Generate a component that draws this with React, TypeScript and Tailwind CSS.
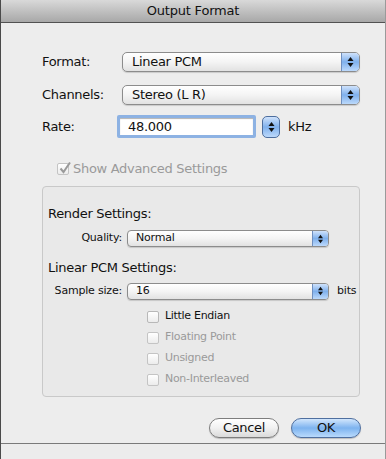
import React from "react";

const font = { fontFamily: '"DejaVu Sans", "Liberation Sans", sans-serif' };

function Arrows({ small }: { small?: boolean }) {
  return (
    <svg width="7" height={small ? 10 : 12} viewBox="0 0 7 12" aria-hidden="true">
      <path d="M3.5 1 L6.5 5 L0.5 5 Z" fill="#111" />
      <path d="M3.5 11 L6.5 7 L0.5 7 Z" fill="#111" />
    </svg>
  );
}

function Popup({ value, small }: { value: string; small?: boolean }) {
  return (
    <div
      className={`flex items-stretch overflow-hidden border border-[#8c8c8c] bg-gradient-to-b from-white via-[#f4f4f4] to-[#e2e2e2] shadow-[0_1px_1px_rgba(0,0,0,0.15)] ${
        small ? "h-[17px] w-[202px] rounded-[4px]" : "h-[20px] flex-1 rounded-[5px]"
      }`}
    >
      <div
        className={`flex flex-1 items-center text-[#111] ${
          small ? "pl-[8px] text-[11px] tracking-[-0.2px]" : "pl-[9px] text-[13px] tracking-[-0.3px]"
        }`}
      >
        {value}
      </div>
      <div
        className={`flex items-center justify-center border-l border-[#6f8fbf] bg-gradient-to-b from-[#cfe2fb] via-[#7fb0ec] to-[#bcd9fb] ${
          small ? "w-[16px]" : "w-[18px]"
        }`}
      >
        <Arrows small={small} />
      </div>
    </div>
  );
}

function Check({ checked, dim }: { checked?: boolean; dim?: boolean }) {
  return (
    <div
      className={`relative flex h-[12px] w-[12px] shrink-0 items-center justify-center rounded-[2px] border bg-gradient-to-b from-white to-[#ececec] ${
        dim ? "border-[#c4c4c4]" : "border-[#b8b8b8]"
      }`}
    >
      {checked ? (
        <svg
          width="14"
          height="14"
          viewBox="0 0 14 14"
          className="absolute -top-[3px] left-[0px]"
          aria-hidden="true"
        >
          <path d="M2.5 7.5 L5.5 11 L12 1.5" fill="none" stroke="#9a9a9a" strokeWidth="2" />
        </svg>
      ) : null}
    </div>
  );
}

export default function App() {
  return (
    <div
      className="flex h-[459px] w-[386px] flex-col overflow-hidden border-l border-r border-l-[#4a4a4a] border-r-[#9a9a9a] bg-[#ededed]"
      style={font}
    >
      <div className="flex h-[23px] shrink-0 items-center justify-center border-b border-[#525252] bg-gradient-to-b from-[#d9d9d9] to-[#a8a8a8] text-[13px] tracking-[-0.2px] text-[#111]">
        Output Format
      </div>

      <div className="flex flex-1 flex-col pl-[41px] pr-[25px] text-[13px] tracking-[-0.3px] text-[#111]">
        <div className="mt-[29px] flex items-center">
          <div className="w-[80px]">Format:</div>
          <Popup value="Linear PCM" />
        </div>
        <div className="mt-[13px] flex items-center">
          <div className="w-[80px]">Channels:</div>
          <Popup value="Stereo (L R)" />
        </div>
        <div className="mt-[10px] flex items-center">
          <div className="w-[75px]">Rate:</div>
          <div className="flex h-[23px] w-[139px] items-center rounded-[2px] border-[3px] border-[#8db2e3] bg-white pl-[8px] shadow-[inset_0_1px_1px_rgba(0,0,0,0.3)]">
            48.000
          </div>
          <div className="ml-[6px] flex h-[22px] w-[18px] flex-col items-center justify-center rounded-[5px] border border-[#4d6e9e] bg-gradient-to-b from-[#cfe2fb] via-[#7fb0ec] to-[#bcd9fb]">
            <Arrows />
          </div>
          <div className="ml-[8px]">kHz</div>
        </div>

        <div className="mt-[21px] flex items-center pl-[15px]">
          <Check checked dim />
          <span className="ml-[4px] text-[#9a9a9a]">Show Advanced Settings</span>
        </div>

        <div className="mt-[7px] flex h-[211px] flex-col rounded-[4px] border border-[#c9c9c9] bg-[#e9e9e9] pl-[5px]">
          <div className="mt-[17px]">Render Settings:</div>
          <div className="mt-[7px] flex items-center">
            <div className="w-[79px] pr-[5px] text-right text-[11px] tracking-[-0.2px]">Quality:</div>
            <Popup value="Normal" small />
          </div>
          <div className="mt-[11px]">Linear PCM Settings:</div>
          <div className="mt-[5px] flex items-center">
            <div className="w-[79px] pr-[5px] text-right text-[11px] tracking-[-0.2px]">Sample size:</div>
            <Popup value="16" small />
            <span className="ml-[8px] text-[11px] tracking-[-0.2px]">bits</span>
          </div>
          <div className="mt-[11px] flex flex-col gap-[9px] pl-[99px] text-[11px] tracking-[-0.3px]">
            {[
              { label: "Little Endian", dim: false },
              { label: "Floating Point", dim: true },
              { label: "Unsigned", dim: true },
              { label: "Non-Interleaved", dim: true },
            ].map((item) => (
              <div key={item.label} className="flex h-[12px] items-center">
                <Check dim={item.dim} />
                <span className={`ml-[6px] ${item.dim ? "text-[#9a9a9a]" : "text-[#111]"}`}>
                  {item.label}
                </span>
              </div>
            ))}
          </div>
        </div>

        <div className="-mr-[1px] mt-[21px] flex justify-end gap-[12px]">
          <button className="flex h-[20px] w-[70px] items-center justify-center rounded-full border border-[#7d7d7d] bg-gradient-to-b from-white via-[#f1f1f1] to-[#dadada] shadow-[0_1px_1px_rgba(0,0,0,0.2)]">
            Cancel
          </button>
          <button className="flex h-[20px] w-[70px] items-center justify-center rounded-full border border-[#4f6f9f] bg-gradient-to-b from-[#d2e6fc] via-[#7db3ef] to-[#b9dafc] shadow-[0_1px_1px_rgba(0,0,0,0.2)]">
            OK
          </button>
        </div>
      </div>

      <div className="h-[16px] shrink-0 border-t border-[#7a7a7a] bg-[#ececec]" />
    </div>
  );
}
